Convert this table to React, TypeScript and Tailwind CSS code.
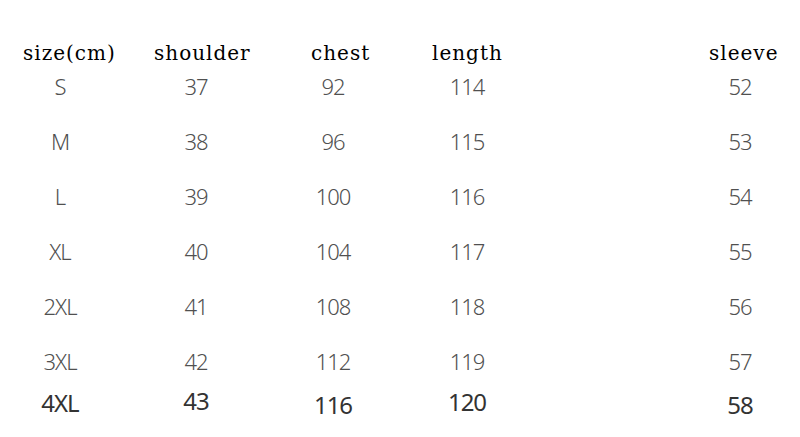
import React from "react";

const rows = [
  ["S", "37", "92", "114", "52"],
  ["M", "38", "96", "115", "53"],
  ["L", "39", "100", "116", "54"],
  ["XL", "40", "104", "117", "55"],
  ["2XL", "41", "108", "118", "56"],
  ["3XL", "42", "112", "119", "57"],
];

const grid = "grid grid-cols-[120px_152px_122px_146px_140px_120px]";

export default function App() {
  return (
    <div className="w-[800px] h-[437px] bg-white overflow-hidden">
      <div
        className={`${grid} pt-[43px] h-[63px] text-[20px] leading-[20px] tracking-[1px] text-black`}
        style={{ fontFamily: '"DejaVu Serif", serif' }}
      >
        <div className="pl-[23px] whitespace-nowrap">size(cm)</div>
        <div className="pl-[34px]">shoulder</div>
        <div className="pl-[39px]">chest</div>
        <div className="pl-[38px]">length</div>
        <div />
        <div className="pl-[29px] whitespace-nowrap">sleeve</div>
      </div>
      <div
        className="text-[#505050] text-[22px] font-light tracking-[-1px] -mt-[4px]"
        style={{ fontFamily: '"Noto Sans", sans-serif' }}
      >
        {rows.map((r) => (
          <div key={r[0]} className={`${grid} h-[55px] items-center`}>
            <div className="text-center">{r[0]}</div>
            <div className="text-center">{r[1]}</div>
            <div className="text-center">{r[2]}</div>
            <div className="text-center">{r[3]}</div>
            <div />
            <div className="text-center">{r[4]}</div>
          </div>
        ))}
        <div className={`${grid} h-[40px] items-start text-[#333] font-normal text-[24px] leading-[32px]`}>
          <div className="text-center mt-[-2px]">4XL</div>
          <div className="text-center mt-[-4px]">43</div>
          <div className="text-center">116</div>
          <div className="text-center mt-[-3px]">120</div>
          <div />
          <div className="text-center">58</div>
        </div>
      </div>
    </div>
  );
}
